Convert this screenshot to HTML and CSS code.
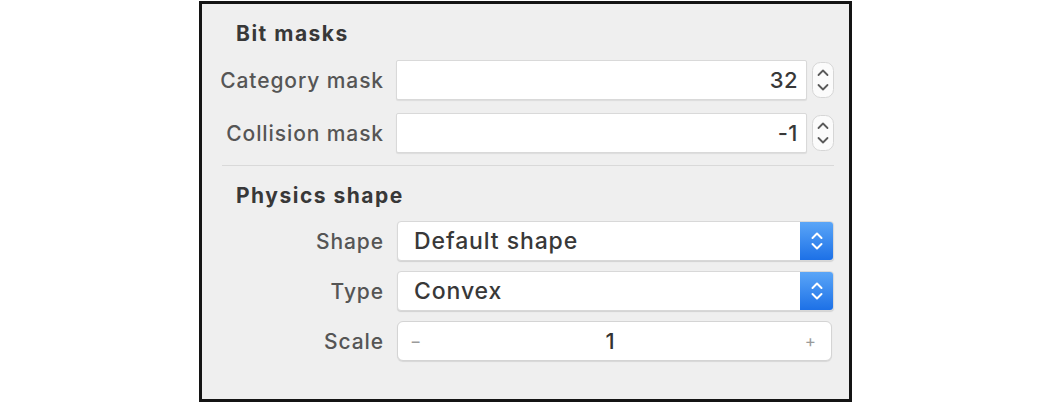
FILE: index.html
```html
<!DOCTYPE html>
<html>
<head>
<meta charset="utf-8">
<link rel="stylesheet" href="styles.css">
</head>
<body>
<div class="panel">
  <div class="section-title first">Bit masks</div>
  <div class="rows rows-bits">
    <div class="row">
      <div class="label">Category mask</div>
      <div class="control">
        <div class="field num">32</div>
        <div class="stepper">
          <svg width="22" height="36" viewBox="0 0 22 36"><rect x="0.5" y="0.5" width="21" height="35" rx="8" fill="#fbfbfb" stroke="#d6d6d6"/><path d="M6.5 13 L11 8.5 L15.5 13" fill="none" stroke="#5a5a5a" stroke-width="1.8" stroke-linecap="round" stroke-linejoin="round"/><path d="M6.5 23 L11 27.5 L15.5 23" fill="none" stroke="#5a5a5a" stroke-width="1.8" stroke-linecap="round" stroke-linejoin="round"/></svg>
        </div>
      </div>
    </div>
    <div class="row">
      <div class="label">Collision mask</div>
      <div class="control">
        <div class="field num">-1</div>
        <div class="stepper">
          <svg width="22" height="36" viewBox="0 0 22 36"><rect x="0.5" y="0.5" width="21" height="35" rx="8" fill="#fbfbfb" stroke="#d6d6d6"/><path d="M6.5 13 L11 8.5 L15.5 13" fill="none" stroke="#5a5a5a" stroke-width="1.8" stroke-linecap="round" stroke-linejoin="round"/><path d="M6.5 23 L11 27.5 L15.5 23" fill="none" stroke="#5a5a5a" stroke-width="1.8" stroke-linecap="round" stroke-linejoin="round"/></svg>
        </div>
      </div>
    </div>
  </div>
  <div class="separator"></div>
  <div class="section-title">Physics shape</div>
  <div class="rows rows-shape">
    <div class="row">
      <div class="label">Shape</div>
      <div class="popup">
        <span class="popup-text">Default shape</span>
        <span class="popup-btn">
          <svg width="14" height="22" viewBox="0 0 14 22"><path d="M2.5 8 L7 3.5 L11.5 8" fill="none" stroke="#fff" stroke-width="2" stroke-linecap="round" stroke-linejoin="round"/><path d="M2.5 14 L7 18.5 L11.5 14" fill="none" stroke="#fff" stroke-width="2" stroke-linecap="round" stroke-linejoin="round"/></svg>
        </span>
      </div>
    </div>
    <div class="row">
      <div class="label">Type</div>
      <div class="popup">
        <span class="popup-text">Convex</span>
        <span class="popup-btn">
          <svg width="14" height="22" viewBox="0 0 14 22"><path d="M2.5 8 L7 3.5 L11.5 8" fill="none" stroke="#fff" stroke-width="2" stroke-linecap="round" stroke-linejoin="round"/><path d="M2.5 14 L7 18.5 L11.5 14" fill="none" stroke="#fff" stroke-width="2" stroke-linecap="round" stroke-linejoin="round"/></svg>
        </span>
      </div>
    </div>
    <div class="row">
      <div class="label">Scale</div>
      <div class="scale">
        <span class="scale-btn">−</span>
        <span class="scale-val">1</span>
        <span class="scale-btn">+</span>
      </div>
    </div>
  </div>
</div>
</body>
</html>
```
FILE: styles.css
```css
html, body {
  margin: 0;
  padding: 0;
  background: #ffffff;
}
body {
  font-family: Inter, "Liberation Sans", sans-serif;
}
.panel {
  box-sizing: border-box;
  margin: 1px 0 0 199px;
  width: 653px;
  height: 401px;
  border: 3px solid #141414;
  background: #efefef;
  padding: 18px 15px 0 0;
}
.section-title {
  font-weight: 700;
  font-size: 21px;
  line-height: 24px;
  color: #383838;
  padding-left: 34px;
  letter-spacing: 1.5px;
}
.rows {
  display: flex;
  flex-direction: column;
}
.rows-bits {
  margin-top: 14px;
  gap: 13px;
}
.rows-shape {
  margin-top: 13px;
  gap: 10px;
}
.row {
  display: grid;
  grid-template-columns: 182px 1fr;
  column-gap: 13px;
  align-items: center;
  height: 40px;
}
.label {
  text-align: right;
  font-size: 21px;
  font-weight: 500;
  color: #555;
  letter-spacing: 0.9px;
}
.control {
  display: flex;
  align-items: center;
  gap: 5px;
  margin-left: -1px;
}
.field {
  flex: 1;
  box-sizing: border-box;
  height: 40px;
  background: #fff;
  border: 1px solid #d9d9d9;
  border-radius: 2px;
  box-shadow: 0 1px 1px rgba(0,0,0,0.08);
}
.num {
  text-align: right;
  padding-right: 8px;
  font-size: 22px;
  font-weight: 500;
  line-height: 38px;
  color: #383838;
  letter-spacing: 0.5px;
}
.stepper {
  width: 22px;
  height: 36px;
  display: flex;
}
.popup {
  display: flex;
  box-sizing: border-box;
  height: 40px;
  background: #fff;
  border: 1px solid #d8d8d8;
  border-radius: 4px;
  box-shadow: 0 1px 1px rgba(0,0,0,0.12);
  overflow: hidden;
}
.popup-text {
  flex: 1;
  padding-left: 16px;
  font-size: 23px;
  font-weight: 500;
  line-height: 38px;
  color: #383838;
  letter-spacing: 0.9px;
}
.popup-btn {
  width: 34px;
  margin: -1px -1px -1px 0;
  background: linear-gradient(#5ca7f8, #1b6fe6);
  display: flex;
  align-items: center;
  justify-content: center;
}
.scale {
  display: flex;
  align-items: center;
  box-sizing: border-box;
  height: 40px;
  margin-right: 2px;
  background: #fff;
  border: 1px solid #d4d4d4;
  border-radius: 6px;
  box-shadow: 0 1px 1px rgba(0,0,0,0.1);
  padding: 0 15px 0 12px;
}
.scale-btn {
  font-size: 17px;
  color: #9a9a9a;
}
.scale-val {
  flex: 1;
  text-align: center;
  font-size: 22px;
  font-weight: 500;
  color: #333;
  padding-right: 6px;
}
.separator {
  height: 1px;
  background: #d9d9d9;
  margin: 12px 0 0 20px;
}
.separator + .section-title {
  margin-top: 18px;
}
```
